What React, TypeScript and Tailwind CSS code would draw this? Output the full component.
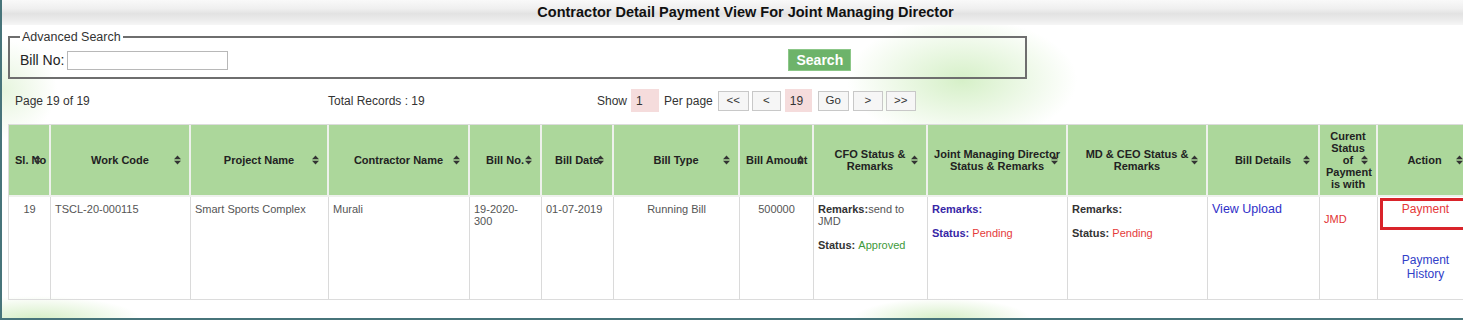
import React from "react";

const Sort = () => (
  <svg
    className="absolute right-[8px] top-1/2 -translate-y-1/2"
    width="7"
    height="10"
    viewBox="0 0 7 10"
  >
    <path d="M0 4.2L3.5 0.5L7 4.2Z M0 5.8L7 5.8L3.5 9.5Z" fill="#333" />
  </svg>
);

const headers: { label: React.ReactNode; nowrap?: boolean }[] = [
  { label: "Sl. No", nowrap: true },
  { label: "Work Code" },
  { label: "Project Name" },
  { label: "Contractor Name" },
  { label: "Bill No." },
  { label: "Bill Date" },
  { label: "Bill Type" },
  { label: "Bill Amount", nowrap: true },
  { label: "CFO Status & Remarks" },
  { label: "Joint Managing Director Status & Remarks" },
  { label: "MD & CEO Status & Remarks" },
  { label: "Bill Details" },
  {
    label: (
      <>
        Curent
        <br />
        Status
        <br />
        of
        <br />
        Payment
        <br />
        is with
      </>
    ),
  },
  { label: "Action" },
];

const widths = [42, 140, 138, 141, 72, 72, 126, 74, 114, 140, 140, 112, 58, 95];

const PgBtn = ({ children, w }: { children: React.ReactNode; w: string }) => (
  <span
    className={`flex h-[20px] items-center justify-center border border-[#c8c8c8] bg-[#f6f6f6] text-[11.5px] text-[#333] ${w}`}
  >
    {children}
  </span>
);

export default function App() {
  return (
    <div className="h-[320px] w-full overflow-hidden border-b-2 border-l-2 border-[#47747a] bg-white bg-[radial-gradient(ellipse_115px_62px_at_960px_80px,#d6f0c8,rgba(255,255,255,0)),radial-gradient(ellipse_55px_50px_at_0px_90px,#e6f5dd,rgba(255,255,255,0)),radial-gradient(ellipse_105px_24px_at_35px_320px,#d4eec4,rgba(255,255,255,0)),radial-gradient(ellipse_90px_22px_at_940px_320px,#d4eec4,rgba(255,255,255,0))] font-['Liberation_Sans',Arial,sans-serif] text-[#333]">
      <div className="flex h-[25px] items-center justify-center bg-[linear-gradient(to_bottom,#f9f9f9_0%,#efefef_35%,#e2e2e2_55%,#ececec_80%,#f6f6f6_100%)] pl-[26px] text-[14.5px] font-bold text-[#111]">
        Contractor Detail Payment View For Joint Managing Director
      </div>

      <fieldset className="ml-[6px] mt-[4px] w-[1019px] border-2 border-[#6e6e6e] pb-[6px] pl-[10px]">
        <legend className="px-[2px] text-[12.5px] leading-[16px] text-[#333]">
          Advanced Search
        </legend>
        <div className="mt-[4px] flex h-[22px] items-center">
          <span className="text-[14px] text-[#222]">Bill No:</span>
          <input
            type="text"
            className="ml-[3px] h-[19px] w-[161px] border border-[#b8b8b8] bg-white"
          />
          <button className="ml-[560px] flex h-[22px] w-[63px] items-center justify-center border border-[#8cc788] bg-[#6db36a] text-[14px] font-bold text-white">
            Search
          </button>
        </div>
      </fieldset>

      <div className="ml-[13px] mt-[10px] flex h-[23px] items-center text-[12px] text-[#333]">
        <span className="w-[313px]">Page 19 of 19</span>
        <span className="w-[269px]">Total Records : 19</span>
        <span>Show</span>
        <span className="ml-[4px] flex h-[23px] w-[28px] items-center bg-[#f5dcdc] pl-[5px] text-[12px]">
          1
        </span>
        <span className="ml-[5px]">Per page</span>
        <div className="ml-[5px] flex items-center">
          <PgBtn w="w-[31px]">&lt;&lt;</PgBtn>
          <span className="w-[3px]" />
          <PgBtn w="w-[29px]">&lt;</PgBtn>
          <span className="ml-[4px] flex h-[23px] w-[27px] items-center bg-[#f5dcdc] pl-[5px] text-[12px]">
            19
          </span>
          <span className="w-[6px]" />
          <PgBtn w="w-[31px]">Go</PgBtn>
          <span className="w-[4px]" />
          <PgBtn w="w-[30px]">&gt;</PgBtn>
          <span className="w-[3px]" />
          <PgBtn w="w-[30px]">&gt;&gt;</PgBtn>
        </div>
      </div>

      <table className="ml-[6px] mt-[12px] w-[1464px] min-w-[1464px] table-fixed border-separate border-spacing-0 border border-[#dcdcdc]">
        <colgroup>
          {widths.map((w, i) => (
            <col key={i} style={{ width: `${w}px` }} />
          ))}
        </colgroup>
        <thead>
          <tr>
            {headers.map((h, i) => (
              <th
                key={i}
                className={`relative h-[72px] border-b-2 border-r-2 border-[#eef1ec] bg-[#acd79b] px-[6px] text-center align-middle text-[11px] font-bold leading-[12px] text-[#222] ${
                  h.nowrap ? "whitespace-nowrap px-[4px]" : ""
                }`}
              >
                {h.label}
                <Sort />
              </th>
            ))}
          </tr>
        </thead>
        <tbody>
          <tr className="align-top text-[11px] leading-[12px] text-[#555]">
            <td className="h-[102px] border-r border-[#dadada] px-[4px] pt-[6px] text-center">19</td>
            <td className="border-r border-[#dadada] px-[4px] pt-[6px]">TSCL-20-000115</td>
            <td className="border-r border-[#dadada] px-[4px] pt-[6px]">Smart Sports Complex</td>
            <td className="border-r border-[#dadada] px-[4px] pt-[6px]">Murali</td>
            <td className="border-r border-[#dadada] px-[4px] pt-[6px]">
              19-2020-
              <br />
              300
            </td>
            <td className="border-r border-[#dadada] px-[4px] pt-[6px]">01-07-2019</td>
            <td className="border-r border-[#dadada] px-[4px] pt-[6px] text-center">Running Bill</td>
            <td className="border-r border-[#dadada] px-[4px] pt-[6px] text-center">500000</td>
            <td className="border-r border-[#dadada] px-[4px] pt-[6px]">
              <span className="font-bold text-[#333]">Remarks:</span>send to JMD
              <br />
              <br />
              <span className="font-bold text-[#333]">Status: </span>
              <span className="text-[#3d9a3a]">Approved</span>
            </td>
            <td className="border-r border-[#dadada] px-[4px] pt-[6px]">
              <span className="font-bold text-[#3726a6]">Remarks:</span>
              <br />
              <br />
              <span className="font-bold text-[#3726a6]">Status: </span>
              <span className="text-[#e53a3a]">Pending</span>
            </td>
            <td className="border-r border-[#dadada] px-[4px] pt-[6px]">
              <span className="font-bold text-[#333]">Remarks:</span>
              <br />
              <br />
              <span className="font-bold text-[#333]">Status: </span>
              <span className="text-[#e53a3a]">Pending</span>
            </td>
            <td className="border-r border-[#dadada] px-[4px] pt-[5px] text-[12.5px] leading-[14px] text-[#2f2fc8]">
              View Upload
            </td>
            <td className="border-r border-[#dadada] px-[4px] pt-[16px] text-[#e23434]">JMD</td>
            <td className="px-[2px] pt-[1px] text-center text-[12px] leading-[14px]">
              <div className="h-[32px] border-[3px] border-[#d9232a] pt-[1px] text-[#e53a3a]">Payment</div>
              <div className="mt-[23px] text-[#3040c8]">
                Payment
                <br />
                History
              </div>
            </td>
          </tr>
        </tbody>
      </table>
    </div>
  );
}
